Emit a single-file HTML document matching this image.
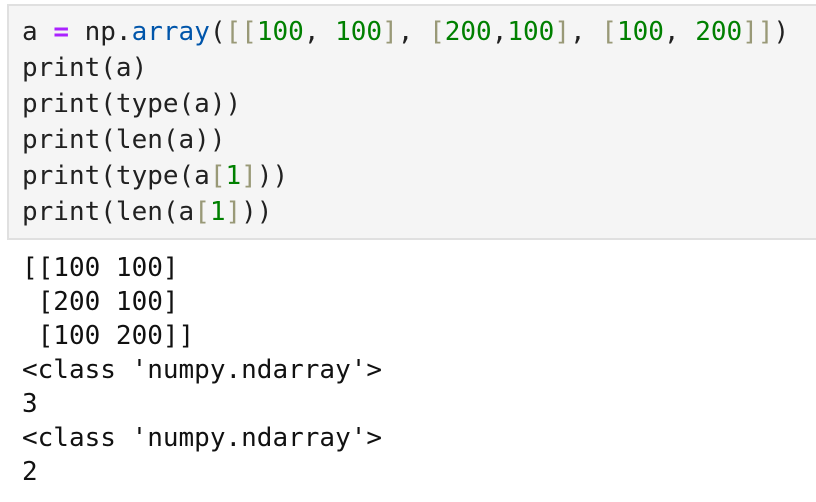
<!DOCTYPE html>
<html><head><meta charset="utf-8"><style>
body{margin:0;width:816px;height:502px;background:#fff;overflow:hidden;font-family:"DejaVu Sans Mono","Liberation Mono",monospace;font-size:26px;color:#212121}
.cell{position:absolute;left:7px;top:4px;width:812px;height:236px;background:#f5f5f5;border:2px solid #e0e0e0;box-sizing:border-box}
pre{margin:0;font:inherit;white-space:pre}
.code{position:absolute;left:22px;top:14px;line-height:36px}
.out{position:absolute;left:22px;top:251px;line-height:34px;color:#111}
.o{color:#aa22ff;font-weight:bold}.f{color:#0055aa}.n{color:#008000}.b{color:#999977}
</style></head><body>
<div class="cell"></div>
<pre class="code">a <span class="o">=</span> np.<span class="f">array</span>(<span class="b">[[</span><span class="n">100</span>, <span class="n">100</span><span class="b">]</span>, <span class="b">[</span><span class="n">200</span>,<span class="n">100</span><span class="b">]</span>, <span class="b">[</span><span class="n">100</span>, <span class="n">200</span><span class="b">]]</span>)
print(a)
print(type(a))
print(len(a))
print(type(a<span class="b">[</span><span class="n">1</span><span class="b">]</span>))
print(len(a<span class="b">[</span><span class="n">1</span><span class="b">]</span>))</pre>
<pre class="out">[[100 100]
 [200 100]
 [100 200]]
&lt;class 'numpy.ndarray'&gt;
3
&lt;class 'numpy.ndarray'&gt;
2</pre>
</body></html>
